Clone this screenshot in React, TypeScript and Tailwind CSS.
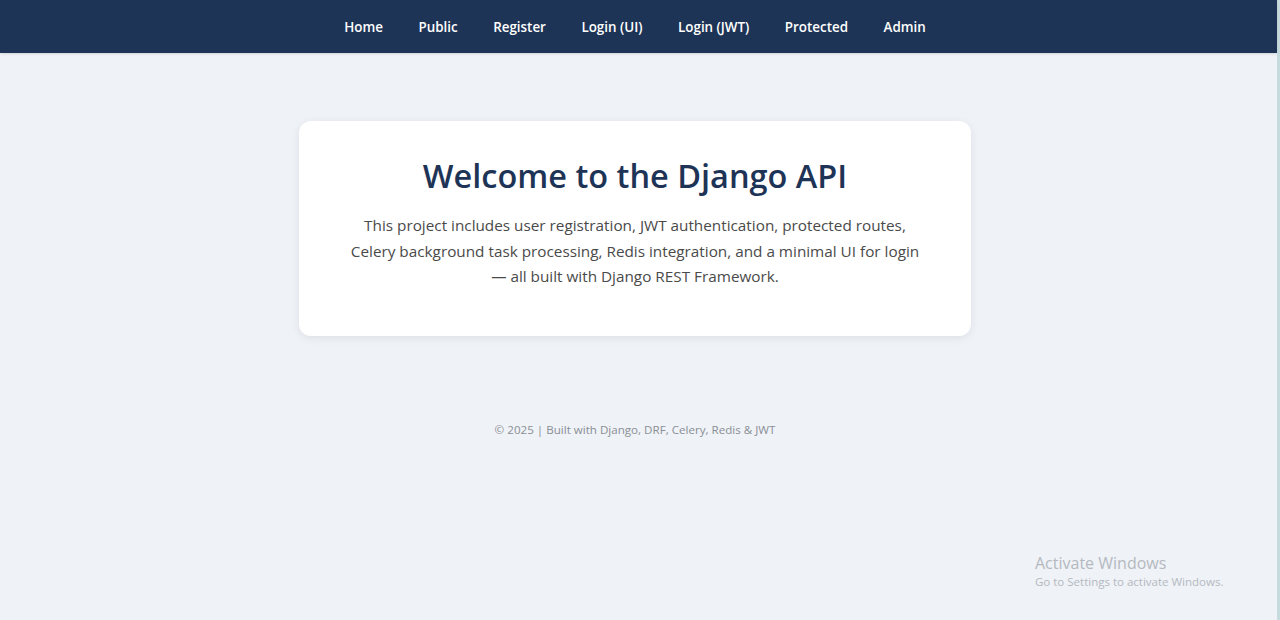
const links = ["Home", "Public", "Register", "Login (UI)", "Login (JWT)", "Protected", "Admin"];

export default function App() {
  return (
    <div className="flex h-[620px] w-full bg-[#eff2f7] font-['Open_Sans',sans-serif]">
      <div className="relative flex flex-1 flex-col">
        {/* top nav */}
        <nav className="flex h-[53px] items-center justify-center bg-[#1e3456] pr-[7px] pt-[2px] shadow-sm">
          <div className="flex items-center gap-[35.5px]">
            {links.map((l) => (
              <a key={l} href="#" className="text-[13.4px] font-semibold text-white">
                {l}
              </a>
            ))}
          </div>
        </nav>

        {/* intro card */}
        <div className="flex justify-center pr-[7px] pt-[68px]">
          <div className="w-[672px] rounded-xl bg-white px-[36px] pb-[46px] pt-[34px] text-center shadow-[0_2px_10px_rgba(0,0,0,0.08)]">
            <h1 className="text-[32.5px] font-semibold leading-[42px] text-[#1e3456]">Welcome to the Django API</h1>
            <p className="mx-auto mt-[16px] max-w-[580px] text-[15.3px] leading-[25.5px] text-[#4a4a4a]">
              This project includes user registration, JWT authentication, protected routes, Celery background task
              processing, Redis integration, and a minimal UI for login — all built with Django REST Framework.
            </p>
          </div>
        </div>

        <footer className="pr-[7px] pt-[85px] text-center text-[11.6px] text-[#8a8f96]">
          © 2025 | Built with Django, DRF, Celery, Redis &amp; JWT
        </footer>

        {/* windows watermark */}
        <div className="absolute left-[1035px] top-[553px] text-[#b4b9bf]">
          <div className="text-[16px] leading-[21px]">Activate Windows</div>
          <div className="text-[11.5px] leading-[16px]">Go to Settings to activate Windows.</div>
        </div>
      </div>
      <div className="w-[3px] bg-[#c6dbde]" />
    </div>
  );
}
